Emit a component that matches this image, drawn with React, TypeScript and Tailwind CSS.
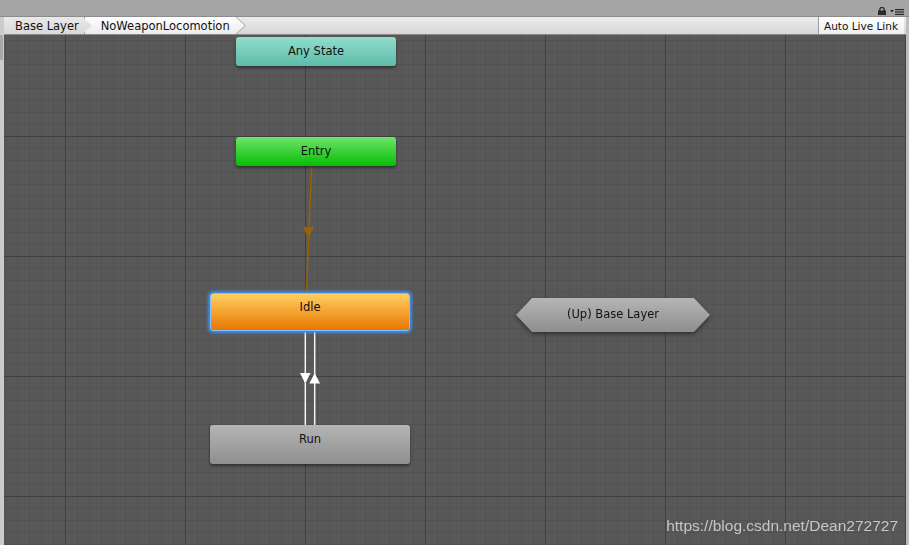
import React from "react";

const font = "font-['DejaVu_Sans',sans-serif]";

function Node({
  label,
  className,
}: {
  label: string;
  className: string;
}) {
  return (
    <div
      className={`absolute flex items-center justify-center rounded-[3px] text-[11.5px] text-[#111] ${font} ${className}`}
    >
      {label}
    </div>
  );
}

function Arrows() {
  // canvas-local coordinates (canvas origin at 4,35)
  return (
    <svg className="absolute inset-0 h-full w-full" width="902" height="510">
      <line x1="307.5" y1="132" x2="302.5" y2="257" stroke="#9a6200" strokeWidth="1.5" />
      <polygon points="299,192 310,192 304.5,203" fill="#9a6200" />
      <line x1="301.3" y1="297" x2="301.3" y2="390" stroke="#f4f4f4" strokeWidth="1.5" />
      <line x1="310.7" y1="297" x2="310.7" y2="390" stroke="#f4f4f4" strokeWidth="1.5" />
      <polygon points="296,338 306.6,338 301.3,348.5" fill="#ffffff" />
      <polygon points="305.4,348.5 316,348.5 310.7,338" fill="#ffffff" />
    </svg>
  );
}

export default function App() {
  return (
    <div className="flex h-[545px] w-[909px] flex-col overflow-hidden bg-[#c4c4c4]">
      {/* window title strip */}
      <div className="flex h-[17px] shrink-0 items-end justify-end gap-[3px] border-b border-[#8c8c8c] bg-[#a5a5a5] pb-[1px] pr-[5px]">
        <svg width="10" height="8" viewBox="0 0 10 8">
          <path d="M2.8 4V2.6a2.2 2.2 0 0 1 4.4 0V4" fill="none" stroke="#2a2a2a" strokeWidth="1.3" />
          <rect x="1" y="3.5" width="8" height="4.5" fill="#2a2a2a" />
        </svg>
        <svg width="14" height="6" viewBox="0 0 14 6">
          <polygon points="0,1 4,1 2,3.5" fill="#2a2a2a" />
          <rect x="5" y="0" width="9" height="1.2" fill="#2a2a2a" />
          <rect x="5" y="2.4" width="9" height="1.2" fill="#2a2a2a" />
          <rect x="5" y="4.8" width="9" height="1.2" fill="#2a2a2a" />
        </svg>
      </div>

      <div className="flex min-h-0 flex-1">
        {/* left dock strip */}
        <div className="flex w-[4px] shrink-0 flex-col bg-[#cbcbcb]">
          <div className="mt-[18px] h-[25px] w-[3px] bg-[#a9a9a9]" />
        </div>

        <div className="flex min-w-0 flex-1 flex-col">
          {/* breadcrumb toolbar */}
          <div className={`flex h-[18px] shrink-0 items-stretch border-b border-[#8a8a8a] bg-[linear-gradient(#ececec,#d6d6d6)] text-[11.5px] leading-none text-[#111] ${font}`}>
            <div className="relative z-10 flex items-center bg-[linear-gradient(#e9e9e9,#d9d9d9)] pl-[11px] pr-[13px] pt-[2px] [clip-path:polygon(0_0,calc(100%-9px)_0,100%_50%,calc(100%-9px)_100%,0_100%)]">
              Base Layer
            </div>
            <div className="relative z-0 -ml-[8px] flex items-center bg-[#9c9c9c] pl-[1px] pr-[1px] [clip-path:polygon(0_0,calc(100%-9px)_0,100%_50%,calc(100%-9px)_100%,0_100%)]">
              <div className="flex h-full items-center bg-[linear-gradient(#ffffff,#ececec)] pl-[16px] pr-[15px] pt-[2px] [clip-path:polygon(0_0,calc(100%-9px)_0,100%_50%,calc(100%-9px)_100%,0_100%)]">
                NoWeaponLocomotion
              </div>
            </div>
            <div className="flex-1" />
            <div className="flex items-center border-l border-[#9a9a9a] bg-[linear-gradient(#ffffff,#eeeeee)] pl-[5px] pr-[6px] pt-[2px] text-[10.5px]">
              Auto Live Link
            </div>
            <div className="w-[2px]" />
          </div>

          {/* graph canvas */}
          <div className="relative min-h-0 flex-1 overflow-hidden bg-[#585858] [background-image:linear-gradient(to_right,#404040_1px,transparent_1px),linear-gradient(to_bottom,#404040_1px,transparent_1px),linear-gradient(to_right,#525252_1px,transparent_1px),linear-gradient(to_bottom,#525252_1px,transparent_1px)] [background-size:120px_120px,120px_120px,12px_12px,12px_12px] [background-position:61px_101px,61px_101px,1px_5px,1px_5px]">
            <Arrows />
            <Node
              label="Any State"
              className="left-[232px] top-[2px] h-[29px] w-[160px] bg-[linear-gradient(#92ddcc,#5dbcaa)] shadow-[0_2px_3px_rgba(0,0,0,0.45)]"
            />
            <Node
              label="Entry"
              className="left-[232px] top-[102px] h-[29px] w-[160px] bg-[linear-gradient(#6ee56a,#06bd06)] shadow-[0_2px_3px_rgba(0,0,0,0.45)]"
            />
            <Node
              label="Idle"
              className="left-[206px] top-[258px] h-[38px] w-[200px] border border-[#7cc4ff] bg-[linear-gradient(#ffcf62,#e97600)] pb-[8px] shadow-[0_0_3px_2px_rgba(60,150,255,0.85)]"
            />
            <Node
              label="Run"
              className="left-[206px] top-[390px] h-[39px] w-[200px] bg-[linear-gradient(#b5b5b5,#8f8f8f)] pb-[9px] shadow-[0_2px_3px_rgba(0,0,0,0.45)]"
            />
            <div className="absolute left-[512px] top-[263px] drop-shadow-[0_2px_2px_rgba(0,0,0,0.45)]">
              <div
                className={`flex h-[34px] w-[194px] items-center justify-center bg-[linear-gradient(#b5b5b5,#8e8e8e)] text-[11.5px] text-[#111] [clip-path:polygon(16px_0,calc(100%-16px)_0,100%_50%,calc(100%-16px)_100%,16px_100%,0_50%)] ${font}`}
              >
                (Up) Base Layer
              </div>
            </div>
            <div className="absolute bottom-[12px] right-[8px] font-['Liberation_Sans',sans-serif] text-[15.5px] leading-none text-[#d2d2d2] opacity-90">
              https://blog.csdn.net/Dean272727
            </div>
          </div>
        </div>

        {/* right strip */}
        <div className="w-[3px] shrink-0 bg-[#bdbdbd]" />
      </div>
    </div>
  );
}
